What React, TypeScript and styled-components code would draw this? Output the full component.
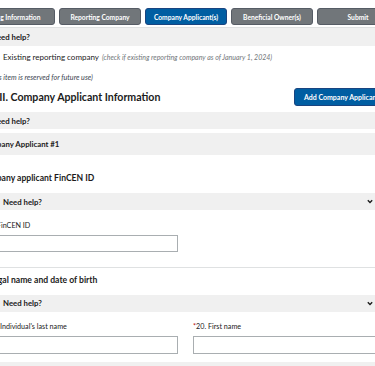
import React from 'react'
import styled, { createGlobalStyle } from 'styled-components'

const GlobalStyle = createGlobalStyle`
  body {
    margin: 0;
    background: #fff;
    overflow: hidden;
    font-family: Lato, "Liberation Sans", sans-serif;
    color: #1b1b1b;
  }
`

const Page = styled.div`
  width: 440px;
  margin-left: -27px;
  padding-top: 8px;
`

const TabRow = styled.div`
  display: flex;
  gap: 4px;
`

const Tab = styled.div<{ $active?: boolean }>`
  width: 82px;
  height: 17px;
  box-sizing: border-box;
  flex: none;
  display: flex;
  align-items: center;
  justify-content: center;
  background: ${p => (p.$active ? '#005ea2' : '#71767a')};
  border: 1px solid ${p => (p.$active ? '#1a4480' : '#565c65')};
  border-radius: 3px;
  color: #fff;
  font-weight: 700;
  font-size: 6.7px;
  white-space: nowrap;
`

const HelpBar = styled.div<{ $height: number; $pad: number; $top: number; $line?: boolean }>`
  height: ${p => p.$height}px;
  margin-top: ${p => p.$top}px;
  border-top: ${p => (p.$line ? '1px solid #dfe1e2' : 'none')};
  background: #f0f0f0;
  display: flex;
  align-items: center;
  padding-left: ${p => p.$pad}px;
  font-weight: 700;
  font-size: 7.8px;
  white-space: nowrap;
`

const CheckRow = styled.div`
  margin-top: 5px;
  height: 12px;
  padding-left: 12px;
  display: flex;
  align-items: center;
  gap: 6px;
  font-size: 8px;
  white-space: nowrap;
`

const Box = styled.span`
  width: 12px;
  height: 12px;
  box-sizing: border-box;
  border: 1px solid #1b1b1b;
  background: #fff;
`

const Hint = styled.span`
  margin-left: -3px;
  font-style: italic;
  font-size: 7px;
  color: #71767a;
`

const Reserved = styled.div`
  margin-top: 9px;
  padding-left: 16px;
  line-height: 12px;
  font-style: italic;
  font-size: 7.2px;
  color: #3d4551;
  white-space: nowrap;
`

const PartRow = styled.div`
  margin-top: 4px;
  height: 18px;
  display: flex;
  align-items: center;
  justify-content: space-between;
  padding-left: 23px;
`

const PartTitle = styled.h2`
  margin: 0;
  font-size: 10.6px;
  font-weight: 700;
  white-space: nowrap;
`

const AddButton = styled.button`
  width: 119px;
  height: 18px;
  padding: 0 0 0 9px;
  text-align: left;
  background: #005ea2;
  border: 1px solid #1a4480;
  border-radius: 3px;
  color: #fff;
  font-family: inherit;
  font-weight: 700;
  font-size: 7px;
  white-space: nowrap;
`

const Section = styled.div<{ $line?: boolean; $top: number }>`
  margin-top: ${p => p.$top}px;
  padding-left: 12px;
  border-top: ${p => (p.$line ? '1px solid #dfe1e2' : 'none')};
`

const SectionTitle = styled.h3<{ $top: number; $shift: number }>`
  margin: ${p => p.$top}px 0 0 ${p => p.$shift}px;
  line-height: 14px;
  font-size: 8.6px;
  font-weight: 700;
  white-space: nowrap;
`

const SubHelp = styled.div`
  margin-top: 8px;
  width: 391px;
  height: 17px;
  box-sizing: border-box;
  padding: 0 3px 0 18px;
  background: #f0f0f0;
  display: flex;
  align-items: center;
  justify-content: space-between;
  font-weight: 700;
  font-size: 7.8px;
`

const Fields = styled.div`
  display: grid;
  grid-template-columns: 193px 193px;
  gap: 0 15px;
  margin-top: 9.5px;
`

const Field = styled.div``

const Label = styled.div`
  line-height: 11px;
  font-size: 7.2px;
  color: #1b1b1b;
  white-space: nowrap;
`

const Req = styled.span`
  color: #b50909;
`

const Input = styled.input<{ $h: number }>`
  display: block;
  margin-top: 4px;
  width: 100%;
  height: ${p => p.$h}px;
  box-sizing: border-box;
  border: 1px solid #a9aeb1;
  border-radius: 0;
  background: #fff;
`

const NextBar = styled.div`
  margin-top: 8px;
  height: 20px;
  background: #f0f0f0;
`

const Chevron = () => (
  <svg width="6" height="5" viewBox="0 0 6 5">
    <path d="M0.8 1.2 L3 3.4 L5.2 1.2" fill="none" stroke="#1b1b1b" strokeWidth="1.4" />
  </svg>
)

export default function App() {
  return (
    <>
      <GlobalStyle />
      <Page>
        <TabRow>
          <Tab>Filing Information</Tab>
          <Tab>Reporting Company</Tab>
          <Tab $active>Company Applicant(s)</Tab>
          <Tab>Beneficial Owner(s)</Tab>
          <Tab>Submit</Tab>
        </TabRow>

        <HelpBar $height={18} $pad={18} $top={2} $line>Need help?</HelpBar>

        <CheckRow>
          <Box />
          <span>Existing reporting company</span>
          <Hint>(check if existing reporting company as of January 1, 2024)</Hint>
        </CheckRow>

        <Reserved>(this item is reserved for future use)</Reserved>

        <PartRow>
          <PartTitle>III. Company Applicant Information</PartTitle>
          <AddButton>Add Company Applicant</AddButton>
        </PartRow>

        <HelpBar $height={17} $pad={18} $top={6}>Need help?</HelpBar>
        <HelpBar $height={22} $pad={8} $top={4}>Company Applicant #1</HelpBar>

        <Section $top={0}>
          <SectionTitle $top={16} $shift={-6}>Company applicant FinCEN ID</SectionTitle>
          <SubHelp>
            <span>Need help?</span>
            <Chevron />
          </SubHelp>
          <Fields>
            <Field>
              <Label>18. FinCEN ID</Label>
              <Input $h={17} />
            </Field>
          </Fields>
        </Section>

        <Section $top={15} $line>
          <SectionTitle $top={5} $shift={4}>Legal name and date of birth</SectionTitle>
          <SubHelp>
            <span>Need help?</span>
            <Chevron />
          </SubHelp>
          <Fields>
            <Field>
              <Label><Req>*</Req>19. Individual's last name</Label>
              <Input $h={18} />
            </Field>
            <Field>
              <Label><Req>*</Req>20. First name</Label>
              <Input $h={18} />
            </Field>
          </Fields>
          <NextBar />
        </Section>
      </Page>
    </>
  )
}
